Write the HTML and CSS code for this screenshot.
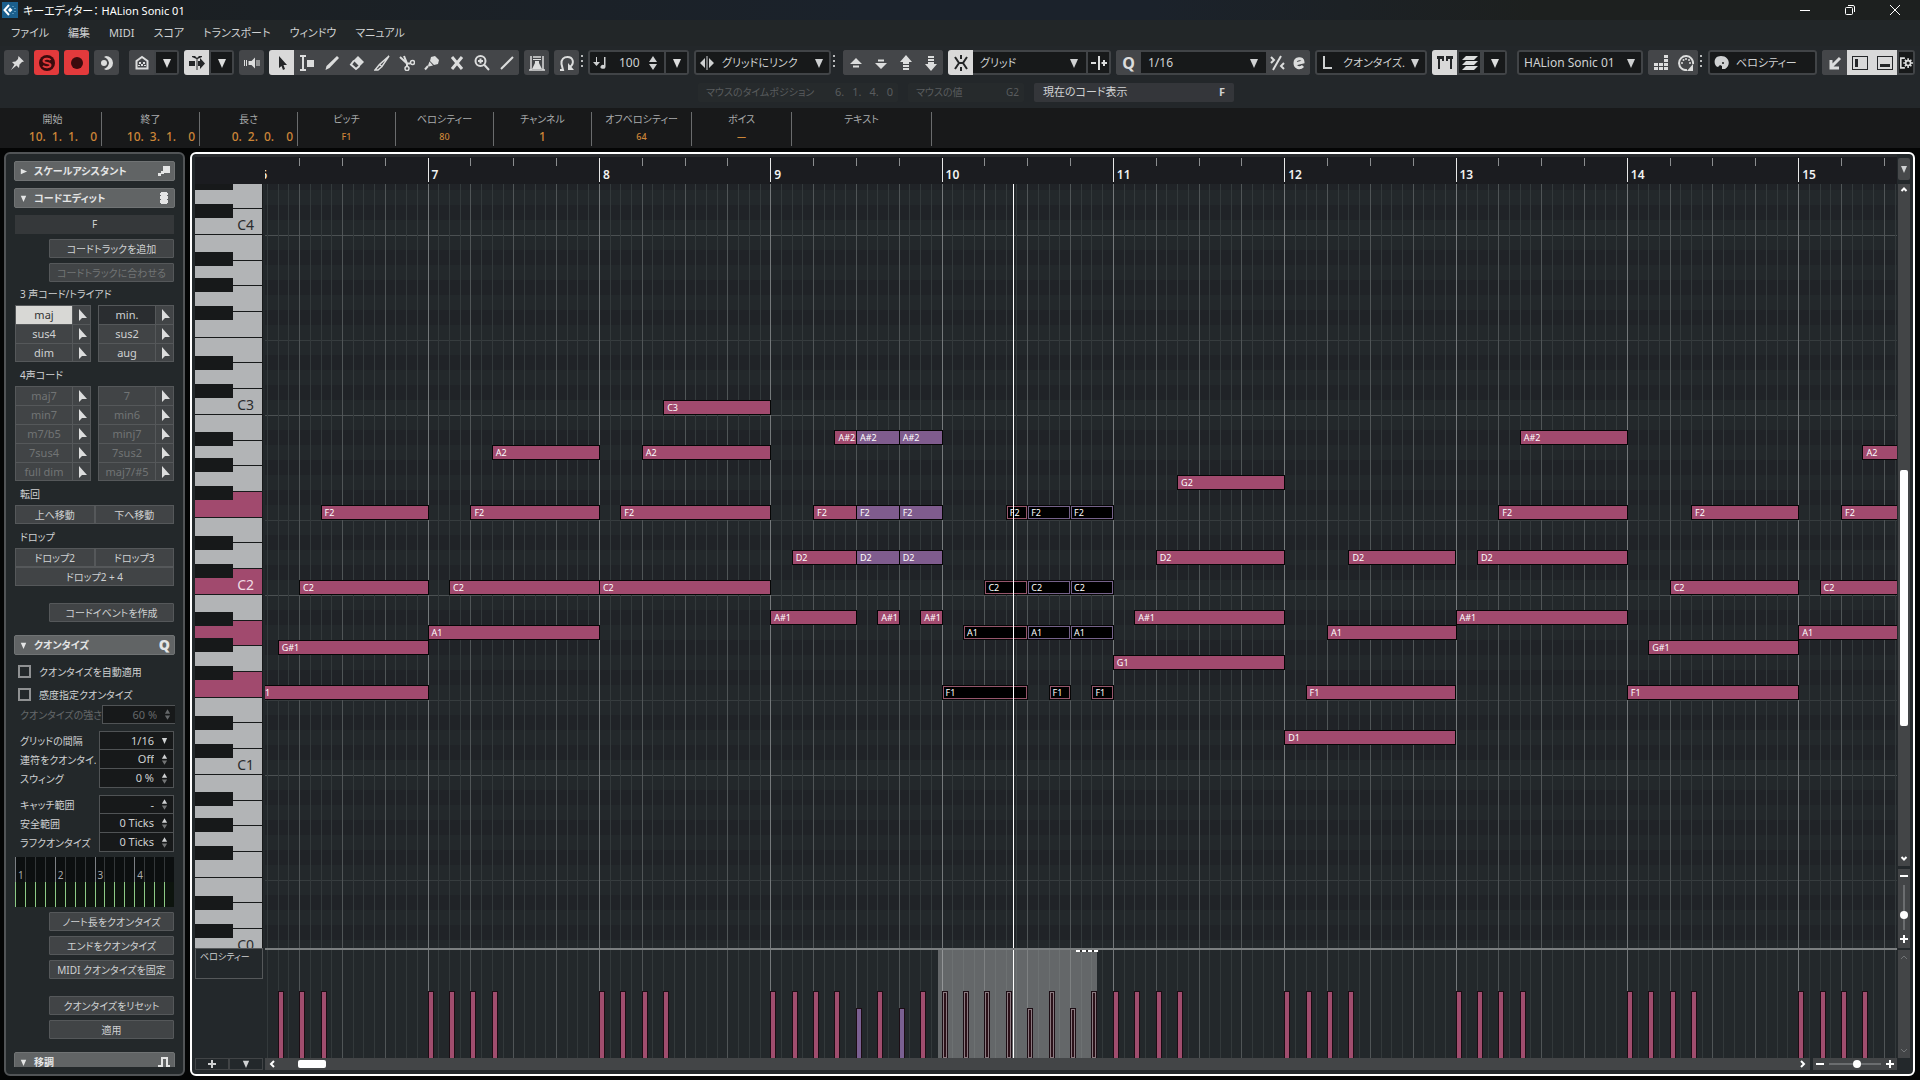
FILE: index.html
```
<!DOCTYPE html>
<html lang="ja">
<head>
  <meta charset="UTF-8" />
  <meta name="viewport" content="width=device-width, initial-scale=1.0"/>
  <title>キーエディター： HALion Sonic 01</title>
  <link rel="stylesheet" href="styles.css">
</head>
<body>

  <!-- TITLE BAR -->
  <header class="titlebar">
    <svg class="app-logo" viewBox="0 0 16 16"><rect width="16" height="16" fill="#1b5f8c"/><path d="M7 3L2.500 8L7 13" fill="none" stroke="#fff" stroke-width="2"/><path d="M8 5.500L10.500 8L8 10.500L6 8Z" fill="#fff"/><path d="M11 4v1M13 6v1M13 9v1M11 11v1" stroke="#8cc5e4"/></svg>
    <h1>キーエディター： HALion Sonic 01</h1>
    <div class="window-buttons">
      <button aria-label="最小化"><svg viewBox="0 0 12 12"><path d="M1 6.500h10"/></svg></button>
      <button aria-label="元に戻す"><svg viewBox="0 0 12 12"><rect x="1.500" y="3.500" width="7" height="7" rx="1"/><path d="M4 1.500h5a1.500 1.500 0 0 1 1.500 1.500v5"/></svg></button>
      <button aria-label="閉じる"><svg viewBox="0 0 12 12"><path d="M1 1l10 10M11 1L1 11"/></svg></button>
    </div>
  </header>

  <nav class="menubar">
    <button>ファイル</button>
    <button>編集</button>
    <button>MIDI</button>
    <button>スコア</button>
    <button>トランスポート</button>
    <button>ウィンドウ</button>
    <button>マニュアル</button>
  </nav>

  <!-- TOOLBAR -->
  <div class="toolbar">
    <div class="group"><button class="tool" aria-label="固定"><svg viewBox="0 0 16 16"><path d="M9.500 1l5.500 5.500-2 .5-2.500 2.500-.5 3.500-2.500-2.500L2 15l3.500-5.500L3 7l3.500-.5L9 4z"/></svg></button></div>
    <div class="group"><button class="tool red" aria-label="ソロ"><svg viewBox="0 0 16 16"><circle cx="8" cy="8" r="8"/><path class="line red-line" d="M11.500 5C10 3 4.500 3.500 4.500 6s7 1.500 7 4-5.500 3-7.500.800"/></svg></button></div>
    <div class="group"><button class="tool red" aria-label="録音"><svg viewBox="0 0 16 16"><circle cx="8" cy="8" r="6"/></svg></button></div>
    <div class="group"><button class="tool" aria-label="レトロスペクティブ録音"><svg viewBox="0 0 16 16"><circle cx="5" cy="8" r="3"/><path d="M7 1a7 7 0 0 1 0 14l-2-1a8 8 0 0 0 5-6 8 8 0 0 0-5-6z"/></svg></button></div>

    <div class="group wide-left">
      <button class="tool" aria-label="エディター表示"><svg viewBox="0 0 16 16"><path class="line" d="M2.500 13.500V6L8 2l5.500 4v7.500z"/><path d="M5 7h2v2H5zM9 7h2v2H9zM7 9h2v2H7zM4 10h2v1H4zM10 10h2v1h-2z"/></svg></button>
      <button class="tool dark" aria-label="表示オプション"><svg viewBox="0 0 16 16"><path d="M4 4h8l-4 9z"/></svg></button>
    </div>
    <div class="group">
      <button class="tool lit" aria-label="自動スクロール"><svg viewBox="0 0 16 16"><path d="M0 6h6v5H0zM9 6h2V3l5 5.500-5 5.500v-3H9zM3 1h3l2 2 2-2h3v1L8.500 4v11h-1V4L3 2z"/></svg></button>
      <button class="tool dark" aria-label="自動スクロール設定"><svg viewBox="0 0 16 16"><path d="M4 4h8l-4 9z"/></svg></button>
    </div>
    <div class="group"><button class="tool" aria-label="試聴"><svg viewBox="0 0 16 16"><path d="M4.500 6h3l3.500-3.500v11L7.500 10h-3z"/><path class="line thin" d="M.5 5v6M2.500 5v6M13 5v6M15 5v6"/></svg></button></div>

    <div class="group">
      <button class="tool lit" aria-label="選択"><svg viewBox="0 0 16 16"><path d="M5 1v12l2.500-2 1.500 4 2-1-1.500-4H13z"/></svg></button>
      <button class="tool" aria-label="範囲"><svg viewBox="0 0 16 16"><path class="line" d="M1 1h6M4 1v14M1 15h6"/><path d="M8 5h7v7H8z"/></svg></button>
      <button class="tool" aria-label="鉛筆"><svg viewBox="0 0 16 16"><path d="M13 1l2 2L5.500 13 1.500 15l1-4z"/></svg></button>
      <button class="tool" aria-label="消しゴム"><svg viewBox="0 0 16 16"><path d="M9 1l6 6-4.500 4.500-6-6z"/><path class="line" d="M5 5.500l-3 4 5 4.500 3.500-3"/></svg></button>
      <button class="tool" aria-label="トリム"><svg viewBox="0 0 16 16"><path class="line mid" d="M15 1L5.500 9.500l2.500 2zM5.500 9.500L1 15h3l4-3.500"/></svg></button>
      <button class="tool" aria-label="はさみ"><svg viewBox="0 0 16 16"><path class="line" d="M1 2l7 6.500M5 1l3 7.500v3M8 8.500h3"/><circle class="line mid" cx="13.500" cy="7.500" r="2"/><circle class="line mid" cx="8" cy="13.500" r="2"/></svg></button>
      <button class="tool" aria-label="のり"><svg viewBox="0 0 16 16"><path d="M11 1l4 4-1 4-4 1-4-4 1-4zM5.500 6.500l3.500 4-4 1-1-1z"/><path class="line" d="M4 11l-3 3.500"/></svg></button>
      <button class="tool" aria-label="ミュート"><svg viewBox="0 0 16 16"><path class="line thick" d="M3 2l10 12M13 2L3 14"/></svg></button>
      <button class="tool" aria-label="ズーム"><svg viewBox="0 0 16 16"><circle class="line" cx="6.500" cy="6" r="5"/><path class="line" d="M10 9.500l5 5.500M4 6h5M6.500 3.500v5"/></svg></button>
      <button class="tool" aria-label="ライン"><svg viewBox="0 0 16 16"><path class="line" d="M2 14L14 2"/></svg></button>
    </div>
    <div class="group"><button class="tool" aria-label="コントローラー"><svg viewBox="0 0 16 16"><path class="line mid" d="M2 15V1M14 1v14M0 15h16M4 2h8"/><path d="M4 4h8v1H4zM6 6h4v2l3 6H3l3-6z"/></svg></button></div>
    <div class="group"><button class="tool" aria-label="ループ"><svg viewBox="0 0 16 16"><path class="line" d="M1 15h3L2.500 9C2 4 5 2 8.500 2 14 2 16 8 11 12"/><path d="M9 8v7h6z"/></svg></button></div>
    <span class="dots"></span>

    <div class="combo velocity">
      <svg viewBox="0 0 16 16"><path d="M0 7h3V2h1v5h3l-3.500 4zM11 2h1.500v10a2.500 2 0 1 1-1.500-2z"/></svg>
      <input type="text" value="100" aria-label="挿入ベロシティー">
      <svg viewBox="0 0 16 16"><path d="M4 7h8L8 1zM4 9h8l-4 6z"/></svg>
      <button class="tool dark split" aria-label="ベロシティー設定"><svg viewBox="0 0 16 16"><path d="M4 4h8l-4 9z"/></svg></button>
    </div>
    <div class="combo link">
      <svg viewBox="0 0 16 16"><path d="M6 3v10L1 8zM10 3v10l5-5zM7.500 1h1v14h-1z"/></svg>
      <select aria-label="ノートの長さ"><option>グリッドにリンク</option></select>
      <svg class="arrow" viewBox="0 0 16 16"><path d="M4 4h8l-4 9z"/></svg>
    </div>
    <span class="dots"></span>
    <div class="group wide-left">
      <button class="tool" aria-label="上へ"><svg viewBox="0 0 16 16"><path d="M2 9h12L8 3zM5 10.500h6v2H5z"/></svg></button>
      <button class="tool" aria-label="下へ"><svg viewBox="0 0 16 16"><path d="M2 8h12l-6 6zM5 4.500h6v2H5z"/></svg></button>
      <button class="tool" aria-label="オクターブ上へ"><svg viewBox="0 0 16 16"><path d="M2 7h12L8 0zM5 7h6v2H5zM5 10h6v2H5zM5 13h6v2H5z"/></svg></button>
      <button class="tool" aria-label="オクターブ下へ"><svg viewBox="0 0 16 16"><path d="M2 9h12l-6 7zM5 7h6v2H5zM5 4h6v2H5zM5 1h6v2H5z"/></svg></button>
    </div>
    <div class="combo snap">
      <button class="tool lit" aria-label="スナップ"><svg viewBox="0 0 16 16"><path class="line" d="M2 2l4 6-4 6M14 2l-4 6 4 6M8 0v4M8 12v4M5 8h6"/></svg></button>
      <select aria-label="スナップの種類"><option>グリッド</option></select>
      <svg class="arrow" viewBox="0 0 16 16"><path d="M4 4h8l-4 9z"/></svg>
      <button class="tool dark split" aria-label="相対グリッド"><svg viewBox="0 0 16 16"><path class="line" d="M0 8h5M8 1v14M10.500 8h5.500M13 5v6"/></svg></button>
    </div>
    <div class="combo quantize">
      <span class="tool key">Q</span>
      <select aria-label="クオンタイズ値"><option>1/16</option></select>
      <svg class="arrow" viewBox="0 0 16 16"><path d="M4 4h8l-4 9z"/></svg>
      <button class="tool" aria-label="ソフトクオンタイズ"><svg viewBox="0 0 16 16"><path class="line" d="M2 2l3 3-3 3M12 1L4 15M15 8l-3 3 3 3"/></svg></button>
      <button class="tool" aria-label="クオンタイズパネル"><svg viewBox="0 0 16 16"><path class="line thick" d="M4 9l8-2c0-5-8-4-8 1s5 6 8 3"/></svg></button>
    </div>
    <div class="combo length">
      <svg viewBox="0 0 16 16"><path class="line" d="M4 1v12h8"/></svg>
      <select aria-label="長さのクオンタイズ"><option>クオンタイズ.</option></select>
      <svg class="arrow" viewBox="0 0 16 16"><path d="M4 4h8l-4 9z"/></svg>
    </div>
    <div class="group">
      <button class="tool lit" aria-label="パート境界"><svg viewBox="0 0 16 16"><path d="M0 1h7v5H5V4H3v10H1V4H0zM9 1h7v3h-1v10h-2V4h-2v2H9z"/></svg></button>
      <button class="tool dark" aria-label="レイヤー"><svg viewBox="0 0 16 16"><path d="M4 1h12l-4 4H0zM4 6h12l-4 4H0zM4 11h12l-4 4H0z"/></svg></button>
      <button class="tool dark" aria-label="レイヤー設定"><svg viewBox="0 0 16 16"><path d="M4 4h8l-4 9z"/></svg></button>
    </div>
    <div class="combo part wide-left">
      <select aria-label="編集パート"><option>HALion Sonic 01</option></select>
      <svg class="arrow" viewBox="0 0 16 16"><path d="M4 4h8l-4 9z"/></svg>
    </div>
    <div class="group">
      <button class="tool" aria-label="ステップ入力"><svg viewBox="0 0 16 16"><path d="M1 12h4v3H1zM6 12h4v3H6zM11 12h4v3h-4zM6 8h4v3H6zM11 8h4v3h-4zM11 4h4v3h-4zM11 0h4v3h-4zM1 8h4v3H1z"/></svg></button>
      <button class="tool" aria-label="MIDI入力"><svg viewBox="0 0 16 16"><path class="line" d="M9 15A7 7 0 1 1 15 9"/><circle cx="4" cy="8" r="1"/><circle cx="5.500" cy="5" r="1"/><circle cx="8" cy="4" r="1"/><circle cx="11" cy="5" r="1"/><circle cx="12" cy="8" r="1"/><path d="M15 9v7H9z"/></svg></button>
    </div>
    <span class="dots"></span>
    <div class="combo color">
      <svg viewBox="0 0 16 16"><path d="M8 1c9 0 10 10 4 13H9v-3l-2-1-2 2C1 12-1 1 8 1z"/><circle cx="10" cy="8" r="1" fill="#17191a"/></svg>
      <select aria-label="イベントの色"><option>ベロシティー</option></select>
    </div>
    <div class="group">
      <button class="tool" aria-label="下ゾーンで開く"><svg viewBox="0 0 16 16"><path class="line thick" d="M13 3L4 12M4 5v8h8"/></svg></button>
      <button class="tool lit" aria-label="左ゾーン"><svg viewBox="0 0 16 16"><rect class="line thin" x=".5" y="1.500" width="15" height="13"/><path d="M3 4h3v8H3z"/></svg></button>
      <button class="tool lit" aria-label="下ゾーン"><svg viewBox="0 0 16 16"><rect class="line thin" x=".5" y="1.500" width="15" height="13"/><path d="M3 9h10v3H3z"/></svg></button>
      <button class="tool dark narrow" aria-label="ツールバー設定"><svg viewBox="0 0 16 16"><path class="line" d="M6 2H1v12h5"/><circle class="line" cx="10" cy="8" r="3"/><path class="line" d="M10 2v3M10 11v3M4 8h3M13 8h3M6 4l2 2M14 4l-2 2M6 12l2-2M14 12l-2-2"/></svg></button>
    </div>
  </div>

  <div class="status-line">
    <div class="status dim"><span>マウスのタイムポジション</span><span class="nums"><b>6.</b><b>1.</b><b>4.</b><b>0</b></span></div>
    <div class="status dim short"><span>マウスの値</span><span>G2</span></div>
    <div class="status"><span>現在のコード表示</span><strong>F</strong></div>
  </div>

  <!-- INFO LINE -->
  <dl class="info-line">
    <div class="time"><dt>開始</dt><dd><b>10.</b><b>1.</b><b>1.</b><b>0</b></dd></div>
    <div class="time"><dt>終了</dt><dd><b>10.</b><b>3.</b><b>1.</b><b>0</b></dd></div>
    <div class="time"><dt>長さ</dt><dd><b>0.</b><b>2.</b><b>0.</b><b>0</b></dd></div>
    <div><dt>ピッチ</dt><dd>F1</dd></div>
    <div><dt>ベロシティー</dt><dd>80</dd></div>
    <div><dt>チャンネル</dt><dd class="big">1</dd></div>
    <div><dt>オフベロシティー</dt><dd>64</dd></div>
    <div><dt>ボイス</dt><dd>—</dd></div>
    <div class="text"><dt>テキスト</dt><dd></dd></div>
  </dl>

  <main class="workspace">
    <!-- INSPECTOR -->
    <aside class="inspector">
      <div class="inspector-inner">
        <button class="section-head"><svg viewBox="0 0 10 10"><path d="M2 2l7 3-7 3z"/></svg><span>スケールアシスタント</span><svg class="mark" viewBox="0 0 12 12"><path d="M5 1h7v7H5zM0 8h3v3H0zM3 6h3v3H3z"/></svg></button>
        <button class="section-head"><svg viewBox="0 0 10 10"><path d="M2 2h6L5 9z"/></svg><span>コードエディット</span><svg class="mark" viewBox="0 0 12 12"><path d="M3 0h6v1h1v2H9v1h1v3H9v1h1v3H9v1H3v-1H2V8h1V7H2V4h1V3H2V1h1z"/></svg></button>
        <output class="chord-name">F</output>
        <button class="action">コードトラックを追加</button>
        <button class="action" disabled>コードトラックに合わせる</button>

        <h2>3 声コード/トライアド</h2>
        <div class="chords" id="triads"></div>
        <h2>4声コード</h2>
        <div class="chords" id="tetrads"></div>

        <h2>転回</h2>
        <div class="pair"><button>上へ移動</button><button>下へ移動</button></div>
        <h2>ドロップ</h2>
        <div class="pair"><button>ドロップ2</button><button>ドロップ3</button><button class="full">ドロップ2 + 4</button></div>
        <button class="action spaced">コードイベントを作成</button>

        <button class="section-head quantize-head"><svg viewBox="0 0 10 10"><path d="M2 2h6L5 9z"/></svg><span>クオンタイズ</span><b>Q</b></button>
        <label class="check"><input type="checkbox">クオンタイズを自動適用</label>
        <label class="check"><input type="checkbox">感度指定クオンタイズ</label>
        <div class="fields">
          <label class="off">クオンタイズの強さ<span class="field"><input type="text" value="60 %" disabled><svg viewBox="0 0 8 14"><path d="M1 6h6L4 1zM1 8h6l-3 5z"/></svg></span></label>
        </div>
        <div class="fields">
          <label>グリッドの間隔<span class="field"><select><option>1/16</option></select><svg viewBox="0 0 8 14"><path d="M1 4h6l-3 7z"/></svg></span></label>
          <label>連符をクオンタイ.<span class="field"><input type="text" value="Off"><svg viewBox="0 0 8 14"><path d="M1 6h6L4 1z"/><path class="faint" d="M1 8h6l-3 5z"/></svg></span></label>
          <label>スウィング<span class="field"><input type="text" value="0 %"><svg viewBox="0 0 8 14"><path d="M1 6h6L4 1z"/><path class="faint" d="M1 8h6l-3 5z"/></svg></span></label>
        </div>
        <div class="fields">
          <label>キャッチ範囲<span class="field"><input type="text" value="-"><svg viewBox="0 0 8 14"><path d="M1 6h6L4 1z"/><path class="faint" d="M1 8h6l-3 5z"/></svg></span></label>
          <label>安全範囲<span class="field"><input type="text" value="0 Ticks"><svg viewBox="0 0 8 14"><path d="M1 6h6L4 1z"/><path class="faint" d="M1 8h6l-3 5z"/></svg></span></label>
          <label>ラフクオンタイズ<span class="field"><input type="text" value="0 Ticks"><svg viewBox="0 0 8 14"><path d="M1 6h6L4 1z"/><path class="faint" d="M1 8h6l-3 5z"/></svg></span></label>
        </div>
        <div class="q-grid" id="qGrid"></div>
        <button class="action">ノート長をクオンタイズ</button>
        <button class="action">エンドをクオンタイズ</button>
        <button class="action">MIDI クオンタイズを固定</button>
        <button class="action spaced">クオンタイズをリセット</button>
        <button class="action">適用</button>
        <button class="section-head quantize-head"><svg viewBox="0 0 10 10"><path d="M2 2h6L5 9z"/></svg><span>移調</span><svg class="mark" viewBox="0 0 12 12"><path class="line" d="M0 10h4V2h5v8h3"/></svg></button>
      </div>
    </aside>

    <!-- KEY EDITOR -->
    <section class="editor">
      <div class="corner"></div>
      <div class="ruler" id="ruler"></div>
      <button class="ruler-menu" aria-label="ルーラー形式"><svg viewBox="0 0 10 10"><path d="M2 2h6L5 9z"/></svg></button>

      <div class="piano" id="piano"></div>
      <div class="roll" id="roll"></div>
      <div class="side-scroll">
        <div class="v-track">
          <svg viewBox="0 0 8 8"><path class="line" d="M1.500 5L4 2.500 6.500 5"/></svg>
          <span class="v-thumb"></span>
          <svg viewBox="0 0 8 8"><path class="line" d="M1.500 3L4 5.500 6.500 3"/></svg>
        </div>
        <div class="v-zoom">
          <svg viewBox="0 0 8 8"><path class="line" d="M0 4h8"/></svg>
          <span class="v-slot"><i></i></span>
          <svg viewBox="0 0 8 8"><path class="line" d="M0 4h8M4 0v8"/></svg>
        </div>
      </div>

      <div class="lane-side"><div class="lane-name">ベロシティー</div></div>
      <div class="lane" id="lane"></div>
      <div class="side-scroll lane-scroll">
        <svg viewBox="0 0 8 8"><path class="line" d="M1 5L4 2l3 3"/></svg>
        <svg viewBox="0 0 8 8"><path class="line" d="M1 3l3 3 3-3"/></svg>
      </div>

      <div class="lane-buttons">
        <button aria-label="レーンを追加"><svg viewBox="0 0 8 8"><path class="line" d="M0 4h8M4 0v8"/></svg></button>
        <button aria-label="レーン設定"><svg viewBox="0 0 10 10"><path d="M1 1h8L5 10z"/></svg></button>
      </div>
      <div class="h-scroll">
        <div class="h-track">
          <svg viewBox="0 0 8 8"><path class="line" d="M5 1L2 4l3 3"/></svg>
          <span class="h-thumb"></span>
          <svg viewBox="0 0 8 8"><path class="line" d="M3 1l3 3-3 3"/></svg>
        </div>
        <div class="h-zoom">
          <svg viewBox="0 0 8 8"><path class="line" d="M0 4h8"/></svg>
          <span class="h-slot"><i></i></span>
          <svg viewBox="0 0 8 8"><path class="line" d="M0 4h8M4 0v8"/></svg>
        </div>
      </div>
      <div class="h-end"></div>
    </section>
  </main>

  <script src="editor.js"></script>
</body>
</html>
```

FILE: styles.css
```
* {
  box-sizing: border-box;
}

body {
  margin: 0;
  height: 100vh;
  display: flex;
  flex-direction: column;
  overflow: hidden;
  background: #040505;
  color: #cfd1d2;
  font-family: "Noto Sans", "Noto Sans CJK JP", sans-serif;
  font-size: 11px;
  line-height: 16px;
  font-feature-settings: "palt";
}

button, input, select {
  font: inherit;
  font-feature-settings: inherit;
  color: inherit;
  margin: 0;
  padding: 0;
  border: 0;
  background: none;
  border-radius: 0;
  min-width: 0;
}

select {
  appearance: none;
}

svg {
  display: block;
  fill: currentColor;
}

.line {
  fill: none;
  stroke: currentColor;
  stroke-width: 2;
}

.thin {
  stroke-width: 1;
}

.mid {
  stroke-width: 1.5;
}

.thick {
  stroke-width: 3;
}

/* Title bar */
.titlebar {
  flex: none;
  height: 20px;
  display: flex;
  align-items: center;
  padding: 0 3px 0 2px;
  background: linear-gradient(90deg, #1b1f21, #1b222b 45%, #1b222b 60%, #1d201f 80%);
  color: #fff;
}

.titlebar h1 {
  flex: 1;
  margin: 2px 0 0 5px;
  font-size: 11px;
  font-weight: normal;
}

.app-logo {
  width: 16px;
  height: 16px;
}

.window-buttons button {
  width: 45px;
  height: 20px;
}

.window-buttons {
  display: flex;
}

.window-buttons svg {
  width: 12px;
  height: 12px;
  margin: 0 auto;
  fill: none;
  stroke: #fff;
}

.menubar {
  flex: none;
  height: 26px;
  display: flex;
  gap: 19px;
  padding-left: 11px;
  background: #222628;
}

/* Toolbar */
.toolbar {
  flex: none;
  display: flex;
  gap: 5px;
  padding: 4px 5px 8px 4px;
  background: #23272a;
}

.group, .combo {
  flex: none;
  display: flex;
  align-items: center;
  height: 25px;
  border-radius: 3px;
  background: #444649;
  overflow: hidden;
}

.combo {
  background: #17191a;
  box-shadow: inset 0 0 0 2px #414447;
}

.wide-left {
  margin-left: 5px;
}

.tool {
  width: 25px;
  height: 25px;
  flex: none;
  display: flex;
  align-items: center;
  justify-content: center;
  background: #444649;
  color: #dcdddd;
}

.tool svg, .combo > svg {
  width: 16px;
  height: 16px;
  flex: none;
}

.tool.lit {
  background: #d9d9d9;
  color: #242628;
}

.tool.red {
  background: #e33a3c;
  color: #3a0b0d;
}

.red-line {
  stroke: #e33a3c;
}

.tool.dark {
  background: #17191a;
  box-shadow: inset 0 0 0 2px #414447;
}

.tool.narrow {
  width: 18px;
}

.tool.narrow svg {
  width: 13px;
}

.tool.key {
  font-size: 16px;
  font-weight: bold;
}

.dots {
  width: 2px;
  margin: 5px -2px 5px -3px;
  background: repeating-linear-gradient(#b8babb 0 2px, transparent 2px 5px);
}

.combo > svg {
  margin-left: 5px;
}

.combo > .arrow {
  margin: 0 4px 0 -20px;
  pointer-events: none;
}

.combo select, .combo input {
  flex: 1;
  align-self: stretch;
  padding-left: 7px;
}

.velocity {
  width: 101px;
  margin-left: 2px;
}

.velocity input {
  font-size: 12px;
}

.velocity > svg {
  margin-right: 3px;
}

.link {
  width: 137px;
}

.snap {
  width: 163px;
}

.quantize {
  width: 194px;
}

.quantize select, .part select {
  font-size: 12px;
}

.quantize button {
  width: 22px;
}

.length {
  width: 112px;
}

.part {
  width: 126px;
}

.color {
  flex: 1;
  margin-left: 3px;
}

/* Status row */
.status-line {
  flex: none;
  display: flex;
  justify-content: center;
  gap: 10px;
  padding: 0 0 6px 12px;
  background: #23272a;
}

.status {
  width: 200px;
  height: 19px;
  display: flex;
  justify-content: space-between;
  padding: 1px 9px;
  border-radius: 2px;
  background: #34363a;
}

.status.dim {
  padding: 1px 5px 1px 8px;
  background: #262a2c;
  color: #595c5e;
  font-size: 10px;
}

.status.short {
  width: 116px;
}

.nums {
  display: flex;
  gap: 8px;
  font-size: 11px;
}

.nums b {
  font-weight: normal;
}

/* Info line */
.info-line {
  flex: none;
  display: flex;
  margin: 0;
  padding: 4px 0 2px 4px;
  background: #18191a;
  text-align: center;
}

.info-line > div {
  width: 98px;
  height: 34px;
  border-right: 1px solid #6a6c6d;
}

.info-line > div:nth-child(n+7) {
  width: 100px;
}

.info-line > div.text:last-child {
  width: 140px;
}

.info-line dt {
  height: 17px;
  line-height: 14px;
  font-size: 10px;
  color: #a9abac;
}

.info-line dd {
  margin: 0;
  font-size: 9px;
  font-weight: 500;
  color: #cd8638;
}

.info-line .time dd {
  display: flex;
  justify-content: flex-end;
  gap: 6px;
  padding-right: 4px;
  font-size: 12px;
}

.info-line b {
  font-weight: 500;
}

.info-line b:last-child {
  margin-left: 6px;
}

.info-line .big {
  font-size: 12px;
}

.workspace {
  flex: 1;
  min-height: 0;
  display: flex;
  gap: 5px;
  padding: 4px 5px 4px 4px;
}

/* Inspector */
.inspector {
  flex: none;
  width: 181px;
  padding: 7px 8px;
  border: 2px solid #515456;
  border-radius: 6px;
  background: #23282a;
  font-size: 10px;
}

.inspector-inner {
  height: 100%;
  overflow: hidden;
}

.inspector button {
  display: block;
}

.inspector .section-head {
  display: flex;
  align-items: center;
  width: 100%;
  height: 20px;
  margin-bottom: 7px;
  padding: 0 4px;
  border: 1px solid #707374;
  border-radius: 2px;
  background: #616465;
  color: #e4e5e5;
  font-weight: 600;
  text-align: left;
}

.section-head span {
  flex: 1;
  margin-left: 6px;
}

.section-head svg {
  width: 9px;
  height: 9px;
}

.section-head .mark {
  width: 12px;
  height: 12px;
}

.section-head b {
  font-size: 14px;
}

.inspector .quantize-head {
  margin: 13px 0 5px;
}

.chord-name {
  display: block;
  height: 19px;
  margin: 0 1px 5px;
  line-height: 18px;
  text-align: center;
  background: #35383a;
}

.inspector .action {
  width: 125px;
  height: 19px;
  margin: 0 1px 5px auto;
  border: 1px solid #55585a;
  border-radius: 1px;
  background: #414446;
  line-height: 16px;
}

.inspector .action:disabled {
  color: #717475;
}

.inspector .action.spaced {
  margin-top: 17px;
}

.inspector h2 {
  height: 24px;
  margin: 0 0 0 6px;
  padding-top: 5px;
  font-size: 10px;
  font-weight: normal;
}

.inspector .action + h2 {
  margin-top: -6px;
}

.chords {
  display: grid;
  grid-template-columns: 1fr 1fr;
  column-gap: 7px;
  margin: 0 1px;
}

.chord {
  display: flex;
  height: 19px;
  border: 1px solid #55585a;
  border-bottom-width: 0;
  background: #414446;
  font-size: 11px;
}

.chord:nth-last-child(-n+2) {
  border-bottom-width: 1px;
}

.chord .name {
  flex: 1;
  line-height: 16px;
}

.chord .drag {
  width: 18px;
  border-left: 1px solid #55585a;
  color: #dcdddd;
}

.chord svg {
  width: 10px;
  height: 12px;
  margin: 0 auto;
}

.chord .name:disabled {
  color: #717475;
}

.chord .name.active {
  background: #d8d8d5;
  color: #333;
}

.chord .name.last {
  background: #2a2d30;
}

.pair {
  display: grid;
  grid-template-columns: 1fr 1fr;
  margin: 0 1px;
}

.pair button {
  height: 19px;
  border: 1px solid #55585a;
  background: #414446;
  line-height: 16px;
}

.pair .full {
  grid-column: span 2;
}

.check {
  display: flex;
  align-items: center;
  height: 23px;
  padding-left: 4px;
}

.check input {
  appearance: none;
  width: 13px;
  height: 13px;
  margin-right: 8px;
  border: 2px solid #8f9192;
}

.fields {
  margin: 0 1px 7px 6px;
}

.check + .fields {
  margin-top: -1px;
}

.fields label {
  display: flex;
  align-items: center;
  justify-content: space-between;
  height: 19px;
  white-space: nowrap;
  color: #cfd1d2;
}

.fields .off {
  color: #65686a;
}

.field {
  display: flex;
  flex: none;
  align-items: center;
  width: 75px;
  height: 19px;
  padding-right: 5px;
  border: 1px solid #505355;
  background: #17191a;
  font-size: 11px;
}

.fields label + label .field {
  border-top: 0;
}

.field input, .field select {
  flex: 1;
  width: 10px;
  text-align: right;
  text-align-last: right;
  padding-right: 7px;
}

.field svg {
  width: 7px;
  height: 13px;
}

.faint {
  opacity: .5;
}

.q-grid {
  display: flex;
  height: 50px;
  margin: -2px 1px 5px;
  background: linear-gradient(#0c0f10 25px, #0d140e 25px);
}

.q-grid span {
  flex: 1;
  height: 50px;
  padding: 10px 0 0 3px;
  background: linear-gradient(#34383a 25px, #8cca85 25px) left / 1px 100% no-repeat;
  color: #a9abac;
}

.q-grid span.beat {
  background-image: linear-gradient(#7b7f84 25px, #8cca85 25px);
}

/* Key editor */
.editor {
  flex: 1;
  min-width: 0;
  display: grid;
  grid-template-columns: 70px 1fr 13px;
  grid-template-rows: 30px 1fr 110px 12px;
  padding: 0 3px 4px;
  border: 2px solid #fff;
  border-radius: 6px;
  background: #23282b;
}

.corner, .ruler {
  border-top: 3px solid #2a2c2f;
  background: #1b1c20;
}

.ruler, .roll, .lane {
  position: relative;
  overflow: hidden;
}

.tick {
  position: absolute;
  top: 1px;
  width: 1px;
  height: 8px;
  background: #8b8d8f;
}

.tick.bar {
  height: 24px;
  background: #e8e8e8;
}

.bar-number {
  position: absolute;
  top: 10px;
  padding-left: 4px;
  font-size: 12px;
  font-weight: 600;
  color: #f2f2f2;
}

.ruler-menu {
  margin: 4px 0 4px 1px;
  border-radius: 2px;
  background: #47494b;
}

.ruler-menu svg {
  width: 10px;
  height: 10px;
  margin: 0 auto;
}

/* first visible C sits 51px below the top edge, one octave is 180px */
.piano {
  overflow: hidden;
  margin-right: 2px;
  border-right: 1px solid #17191a;
  background: #b2b4b6;
}

.octave {
  position: relative;
  display: flex;
  flex-direction: column;
  height: 180px;
}

.octave:first-child {
  margin-top: -129px;
}

.white-key {
  flex: 1;
  padding: 7px 8px 0 0;
  border-bottom: 1px solid #17191a;
  background: #b2b4b6;
  color: #2b2c2d;
  font-size: 14px;
  line-height: 18px;
  text-align: right;
}

.white-key.on {
  background: #a14a6e;
  color: #f0dce4;
}

.black-key {
  position: absolute;
  left: 0;
  width: 38px;
  height: 14px;
  background: #17191a;
}

.roll {
  background: #23282b repeating-linear-gradient(
    #4b5052 0 1px, #23282b 1px 15px, #202327 15px 30px,
    #23282b 30px 45px, #202327 45px 60px,
    #23282b 60px 75px, #202327 75px 90px,
    #23282b 90px 105px, #363c3e 105px 106px, #23282b 106px 120px,
    #202327 120px 135px, #23282b 135px 150px,
    #202327 150px 165px, #23282b 165px 180px) 0 51px / 100% 180px;
}

.grid-line {
  position: absolute;
  top: 0;
  bottom: 0;
  width: 1px;
  background: #33393b;
}

.grid-line.beat {
  background: #505557;
}

.grid-line.bar {
  background: #74787a;
}

.note {
  position: absolute;
  height: 15px;
  padding-left: 3px;
  overflow: hidden;
  border: 1px solid #060606;
  background: #a14a6e;
  color: #fff;
  font-size: 9px;
  line-height: 14px;
}

.note.soft {
  background: #7f5c8e;
}

.note.selected {
  background: #000;
  box-shadow: inset 0 0 0 1px #95566c;
}

.note.selected.soft {
  box-shadow: inset 0 0 0 1px #75628a;
}

.playhead {
  position: absolute;
  top: 0;
  bottom: 0;
  width: 1px;
  background: #fff;
}

.side-scroll {
  display: flex;
  flex-direction: column;
  gap: 3px;
  margin-left: 1px;
  color: #fff;
}

.side-scroll svg {
  flex: none;
  width: 8px;
  height: 8px;
}

.v-track, .v-zoom {
  display: flex;
  flex-direction: column;
  align-items: center;
  background: #434547;
}

.v-track {
  flex: 1;
  padding: 2px 0 4px;
}

.v-thumb {
  width: 8px;
  height: 38%;
  margin: auto 0;
  border-radius: 2px;
  background: #fff;
}

.v-track svg:first-child {
  margin-bottom: 148px;
}

.v-zoom {
  height: 79px;
  padding: 3px 0 5px;
}

.v-slot, .h-slot {
  display: flex;
  align-items: center;
  justify-content: center;
  flex: 1;
  margin: 5px 0;
}

.v-slot {
  width: 2px;
  padding-top: 14px;
  background: #6b6d6f;
}

.v-slot i, .h-slot i {
  flex: none;
  width: 8px;
  height: 8px;
  border-radius: 50%;
  background: #fff;
}

/* Velocity lane */
.lane-name {
  width: 68px;
  height: 31px;
  padding-left: 4px;
  border: 1px solid #55585a;
  font-size: 9px;
}

.lane {
  border-top: 2px solid #7b7f80;
}

.selection {
  position: absolute;
  top: 0;
  bottom: 0;
  background: rgba(190, 190, 190, .42);
}

.handle {
  position: absolute;
  top: 0;
  height: 2px;
  width: 23px;
  background: repeating-linear-gradient(90deg, #fff 0 4px, #333 4px 6px);
}

.stem {
  position: absolute;
  bottom: 0;
  width: 6px;
  height: 67px;
  border: 1px solid #1c0d14;
  border-bottom: 0;
  background: #a04d6e;
}

.stem.soft {
  height: 50px;
  background: #7a6092;
}

.stem.selected {
  background: #2b1119;
  box-shadow: inset 0 0 0 1px #8b7a80;
}

.lane-scroll {
  margin-top: 2px;
  align-items: center;
  justify-content: space-between;
  padding: 4px 0;
  background: #434547;
  color: #707375;
}

.lane-scroll .line {
  stroke-width: 1;
}

.lane-buttons {
  display: flex;
  width: 68px;
}

.lane-buttons button {
  flex: 1;
  border: 1px solid #414446;
}

.lane-buttons svg {
  width: 8px;
  height: 8px;
  margin: 0 auto;
}

.h-scroll {
  display: flex;
  gap: 3px;
  color: #fff;
}

.h-scroll svg {
  width: 8px;
  height: 8px;
}

.h-track, .h-zoom {
  display: flex;
  align-items: center;
  padding: 0 4px;
  background: #434547;
}

.h-track {
  flex: 1;
}

.h-track svg:last-child {
  margin-left: auto;
}

.h-thumb {
  width: 28px;
  height: 8px;
  margin-left: 21px;
  border-radius: 2px;
  background: #fff;
}

.h-zoom {
  width: 84px;
  padding: 0 3px;
}

.h-slot {
  height: 2px;
  margin: 0 5px;
  padding-left: 4px;
  background: #6b6d6f;
}
```

FILE: editor.js
```
const FIRST_BAR = 6.051;
const BAR_SPAN = 9.526;
const PITCHES = ["C", "C#", "D", "D#", "E", "F", "F#", "G", "G#", "A", "A#", "B"];
const ACTIVE_KEYS = ["F2", "C2", "A1", "F1"];

// name, start, end (in bars), flags: s = soft velocity, x = selected
const notes = [
  ["F1", 6, 7], ["G#1", 6.125, 7], ["C2", 6.25, 7], ["F2", 6.375, 7],
  ["A1", 7, 8], ["C2", 7.125, 8], ["F2", 7.25, 8], ["A2", 7.375, 8],
  ["C2", 8, 9], ["F2", 8.125, 9], ["A2", 8.25, 9], ["C3", 8.375, 9],
  ["A#1", 9, 9.5], ["D2", 9.125, 9.5], ["F2", 9.25, 9.5], ["A#2", 9.375, 9.5],
  ["D2", 9.5, 9.75, "s"], ["F2", 9.5, 9.75, "s"], ["A#2", 9.5, 9.75, "s"],
  ["A#1", 9.625, 9.75],
  ["D2", 9.75, 10, "s"], ["F2", 9.75, 10, "s"], ["A#2", 9.75, 10, "s"],
  ["A#1", 9.875, 10],
  ["F1", 10, 10.5, "x"], ["A1", 10.125, 10.5, "x"], ["C2", 10.25, 10.5, "x"], ["F2", 10.375, 10.5, "x"],
  ["A1", 10.5, 10.75, "sx"], ["C2", 10.5, 10.75, "sx"], ["F2", 10.5, 10.75, "sx"],
  ["F1", 10.625, 10.75, "x"],
  ["A1", 10.75, 11, "sx"], ["C2", 10.75, 11, "sx"], ["F2", 10.75, 11, "sx"],
  ["F1", 10.875, 11, "x"],
  ["G1", 11, 12], ["A#1", 11.125, 12], ["D2", 11.25, 12], ["G2", 11.375, 12],
  ["D1", 12, 13], ["F1", 12.125, 13], ["A1", 12.25, 13], ["D2", 12.375, 13],
  ["A#1", 13, 14], ["D2", 13.125, 14], ["F2", 13.25, 14], ["A#2", 13.375, 14],
  ["F1", 14, 15], ["G#1", 14.125, 15], ["C2", 14.25, 15], ["F2", 14.375, 15],
  ["A1", 15, 16], ["C2", 15.125, 16], ["F2", 15.25, 16], ["A2", 15.375, 16]
];

const ruler = document.getElementById("ruler");
const roll = document.getElementById("roll");
const lane = document.getElementById("lane");

function xOf(bar) {
  return (bar - FIRST_BAR) / BAR_SPAN * 100;
}

function add(parent, className, bar, text = "") {
  const el = document.createElement("div");
  el.className = className;
  el.textContent = text;
  if (bar !== null) el.style.left = xOf(bar) + "%";
  parent.appendChild(el);
  return el;
}

function drawGrid() {
  for (let i = 0; i < 10 * 16; i++) {
    const bar = 6 + i / 16;
    const kind = i % 16 === 0 ? " bar" : i % 4 === 0 ? " beat" : "";
    add(roll, "grid-line" + kind, bar);
    add(lane, "grid-line" + kind, bar);
    if (i % 4 === 0) add(ruler, "tick" + kind, bar);
    if (i % 16 === 0) add(ruler, "bar-number", bar, String(bar));
  }
}

function drawNotes() {
  add(lane, "selection", 9.98).style.width = 0.93 / BAR_SPAN * 100 + "%";
  add(lane, "handle", 10.785);
  const stems = new Set();
  notes.forEach(([name, start, end, flags = ""]) => {
    const soft = flags.includes("s") ? " soft" : "";
    const selected = flags.includes("x") ? " selected" : "";
    const key = PITCHES.indexOf(name.slice(0, -1)) + 12 * Number(name.slice(-1));
    const note = add(roll, "note" + soft + selected, start, name);
    note.style.top = 36 + (48 - key) * 15 + "px";
    note.style.width = `calc(${(end - start) / BAR_SPAN * 100}% + 1px)`;
    if (!stems.has(start)) {
      stems.add(start);
      add(lane, "stem" + soft + selected, start);
    }
  });
  add(roll, "playhead", 10.419);
  add(lane, "playhead", 10.419);
}

function drawPiano() {
  const piano = document.getElementById("piano");
  for (let oct = 4; oct >= 0; oct--) {
    const octave = add(piano, "octave", null);
    ["B", "A", "G", "F", "E", "D", "C"].forEach(k => {
      const on = ACTIVE_KEYS.includes(k + oct) ? " on" : "";
      add(octave, "white-key" + on, null, k === "C" ? k + oct : "");
    });
    [17, 43, 71, 121, 149].forEach(top => {
      add(octave, "black-key", null).style.top = top + "px";
    });
  }
}

function drawChords(id, names, disabled) {
  document.getElementById(id).innerHTML = names.map(n => `
    <div class="chord">
      <button class="name ${n === "maj" ? "active" : n === "min." ? "last" : ""}" ${disabled ? "disabled" : ""}>${n}</button>
      <button class="drag" aria-label="${n}"><svg viewBox="0 0 10 12"><path d="M2 0v12l3-3h5z"/></svg></button>
    </div>`).join("");
}

function drawQuantizeGrid() {
  const grid = document.getElementById("qGrid");
  for (let i = 0; i < 16; i++) {
    const span = document.createElement("span");
    if (i % 4 === 0) {
      span.className = "beat";
      span.textContent = i / 4 + 1;
    }
    grid.appendChild(span);
  }
}

drawGrid();
drawNotes();
drawPiano();
drawChords("triads", ["maj", "min.", "sus4", "sus2", "dim", "aug"], false);
drawChords("tetrads", ["maj7", "7", "min7", "min6", "m7/b5", "minj7", "7sus4", "7sus2", "full dim", "maj7/#5"], true);
drawQuantizeGrid();
```
